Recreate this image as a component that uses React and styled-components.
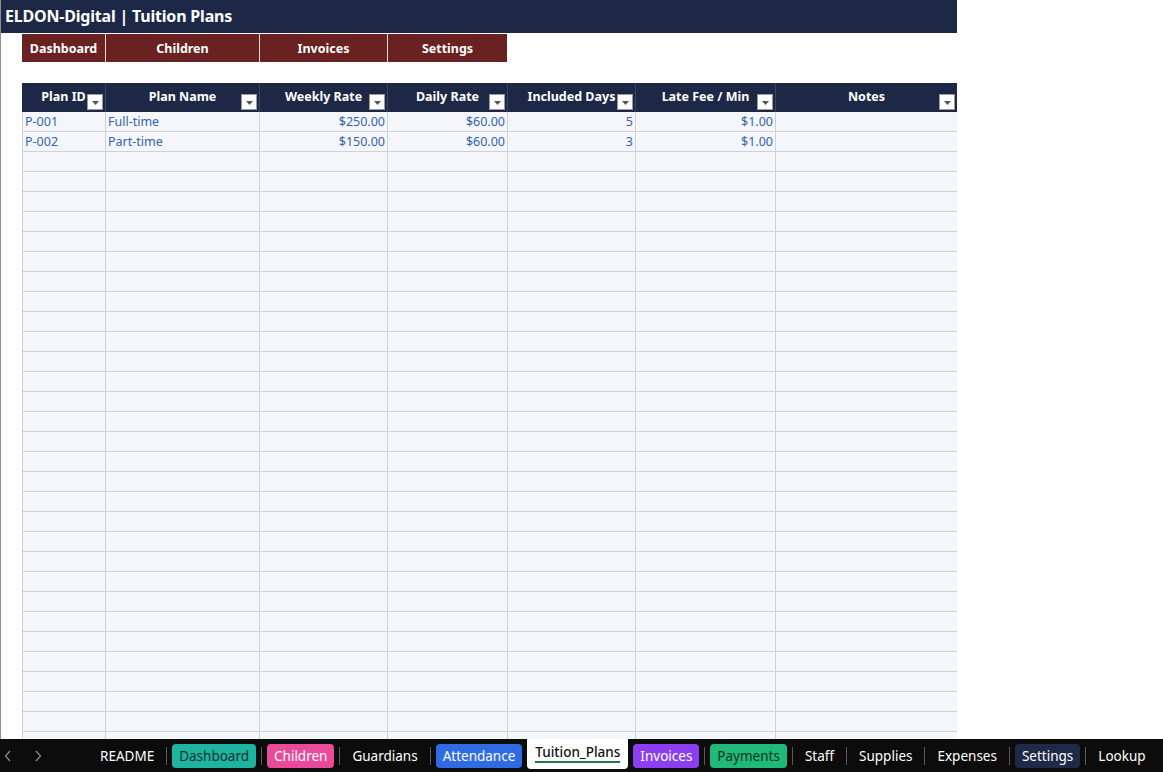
import React from "react";
import styled, { createGlobalStyle } from "styled-components";

const GlobalStyle = createGlobalStyle`
  html, body {
    margin: 0;
    padding: 0;
    background: #ffffff;
    width: 1163px;
    height: 772px;
    overflow: hidden;
  }
  * { box-sizing: border-box; }
`;

const columns = [
  { key: "id", label: "Plan ID", width: 83, align: "left" },
  { key: "name", label: "Plan Name", width: 154, align: "left" },
  { key: "weekly", label: "Weekly Rate", width: 128, align: "right" },
  { key: "daily", label: "Daily Rate", width: 120, align: "right" },
  { key: "days", label: "Included Days", width: 128, align: "right" },
  { key: "late", label: "Late Fee / Min", width: 140, align: "right" },
  { key: "notes", label: "Notes", width: 182, align: "left" },
];

const plans = [
  { id: "P-001", name: "Full-time", weekly: "$250.00", daily: "$60.00", days: "5", late: "$1.00", notes: "" },
  { id: "P-002", name: "Part-time", weekly: "$150.00", daily: "$60.00", days: "3", late: "$1.00", notes: "" },
];

const navLinks = [
  { label: "Dashboard", width: 83 },
  { label: "Children", width: 154 },
  { label: "Invoices", width: 128 },
  { label: "Settings", width: 120 },
];

const sheets = [
  { name: "README" },
  { name: "Dashboard", bg: "#1fb3a1", fg: "#10332e" },
  { name: "Children", bg: "#e94a9a", fg: "#ffffff" },
  { name: "Guardians" },
  { name: "Attendance", bg: "#2f6be3", fg: "#ffffff" },
  { name: "Tuition_Plans", active: true },
  { name: "Invoices", bg: "#8b3ff0", fg: "#ffffff" },
  { name: "Payments", bg: "#1fba7a", fg: "#0f3324" },
  { name: "Staff" },
  { name: "Supplies" },
  { name: "Expenses" },
  { name: "Settings", bg: "#1e2a47", fg: "#ffffff" },
  { name: "Lookup" },
];

const App = () => {
  const emptyRows = Array.from({ length: 30 });
  return (
    <>
      <GlobalStyle />
      <Page>
        <Sheet>
          <TitleBar>ELDON-Digital | Tuition Plans</TitleBar>
          <NavRow>
            {navLinks.map((n) => (
              <NavButton key={n.label} $w={n.width}>{n.label}</NavButton>
            ))}
          </NavRow>
          <Table>
            <HeaderRow>
              {columns.map((c) => (
                <HeaderCell key={c.key} $w={c.width}>
                  <span>{c.label}</span>
                  <FilterButton>
                    <svg width="7" height="4" viewBox="0 0 7 4">
                      <path d="M0 0 L7 0 L3.5 4 Z" fill="#555" />
                    </svg>
                  </FilterButton>
                </HeaderCell>
              ))}
            </HeaderRow>
            {plans.map((p) => (
              <Row key={p.id}>
                {columns.map((c) => (
                  <Cell key={c.key} $w={c.width} $align={c.align}>{p[c.key]}</Cell>
                ))}
              </Row>
            ))}
            {emptyRows.map((_, i) => (
              <Row key={i}>
                {columns.map((c) => (
                  <Cell key={c.key} $w={c.width} />
                ))}
              </Row>
            ))}
          </Table>
        </Sheet>
        <TabBar>
          <Arrows>
            <svg width="8" height="12" viewBox="0 0 8 12">
              <path d="M6 1 L1.5 6 L6 11" stroke="#8a8a8a" strokeWidth="1.3" fill="none" />
            </svg>
            <svg width="8" height="12" viewBox="0 0 8 12">
              <path d="M2 1 L6.5 6 L2 11" stroke="#8a8a8a" strokeWidth="1.3" fill="none" />
            </svg>
          </Arrows>
          <Tabs>
            {sheets.map((s, i) => (
              <React.Fragment key={s.name}>
                {i > 0 && !s.active && !sheets[i - 1].active && <Divider />}
                {s.active ? (
                  <ActiveTab>{s.name}</ActiveTab>
                ) : (
                  <Tab $bg={s.bg} $fg={s.fg}>{s.name}</Tab>
                )}
              </React.Fragment>
            ))}
          </Tabs>
        </TabBar>
      </Page>
    </>
  );
};

const Page = styled.div`
  width: 1163px;
  height: 772px;
  display: flex;
  flex-direction: column;
  font-family: "Noto Sans", "Open Sans", sans-serif;
`;

const Sheet = styled.div`
  flex: 1;
  min-height: 0;
  overflow: hidden;
  border-left: 1px solid #8c8c8c;
  display: flex;
  flex-direction: column;
  & > * { flex-shrink: 0; }
`;

const TitleBar = styled.div`
  width: 956px;
  height: 33px;
  background: #1d2846;
  color: #ffffff;
  font-weight: 700;
  font-size: 16px;
  line-height: 33px;
  padding-left: 4px;
  letter-spacing: -0.2px;
`;

const NavRow = styled.div`
  display: flex;
  margin-left: 21px;
  margin-top: 1px;
  height: 28px;
`;

const NavButton = styled.div`
  width: ${(p) => p.$w}px;
  background: #6a2121;
  color: #ffffff;
  font-weight: 700;
  font-size: 12.5px;
  display: flex;
  align-items: center;
  justify-content: center;
  border-left: 1px solid #e9dada;
  &:first-child { border-left: none; }
`;

const Table = styled.div`
  margin-top: 21px;
  margin-left: 21px;
  width: 935px;
`;

const HeaderRow = styled.div`
  display: flex;
  height: 29px;
  background: #1d2846;
`;

const HeaderCell = styled.div`
  position: relative;
  width: ${(p) => p.$w}px;
  color: #ffffff;
  font-weight: 700;
  font-size: 12.5px;
  text-align: center;
  padding-top: 5px;
  border-left: 1px solid #3a4563;
  &:first-child { border-left: none; }
`;

const FilterButton = styled.div`
  position: absolute;
  right: 2px;
  bottom: 2px;
  width: 16px;
  height: 16px;
  background: #ffffff;
  border: 1px solid #9a9a9a;
  display: flex;
  align-items: center;
  justify-content: center;
  padding-top: 2px;
`;

const Row = styled.div`
  display: flex;
  height: 20px;
  background: #f5f6fa;
  border-bottom: 1px solid #cdd1d8;
`;

const Cell = styled.div`
  width: ${(p) => p.$w}px;
  border-left: 1px solid #cdd1d8;
  color: #3463b0;
  font-size: 12.5px;
  line-height: 19px;
  padding: 0 2px;
  text-align: ${(p) => p.$align || "left"};
  white-space: nowrap;
`;

const TabBar = styled.div`
  flex-shrink: 0;
  height: 33px;
  background: #0c0c0c;
  display: flex;
  align-items: center;
  font-family: "Noto Sans", "Open Sans", sans-serif;
  font-size: 13.5px;
`;

const Arrows = styled.div`
  flex-shrink: 0;
  display: flex;
  gap: 22px;
  padding-left: 4px;
  width: 93px;
`;

const Tabs = styled.div`
  display: flex;
  align-items: center;
  height: 100%;
  white-space: nowrap;
`;

const Divider = styled.div`
  width: 1px;
  height: 18px;
  background: #5a5a5a;
  margin: 0 5px;
`;

const Tab = styled.div`
  height: 24px;
  padding: 0 7px;
  border-radius: 4px;
  display: flex;
  align-items: center;
  background: ${(p) => p.$bg || "transparent"};
  color: ${(p) => p.$fg || "#ffffff"};
`;

const ActiveTab = styled.div`
  align-self: flex-start;
  height: 30px;
  margin: 0 5px;
  padding: 0 8px 4px;
  background: #ffffff;
  color: #111111;
  font-weight: 500;
  border-radius: 0 0 4px 4px;
  display: flex;
  align-items: center;
  position: relative;
  &::after {
    content: "";
    position: absolute;
    left: 8px;
    right: 8px;
    bottom: 6px;
    height: 2px;
    background: #1e7a4b;
  }
`;

export default App;
